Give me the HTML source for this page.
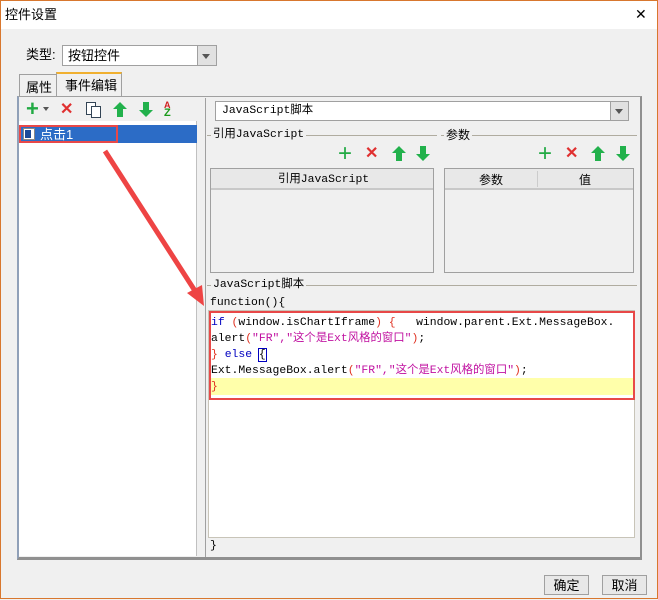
<!DOCTYPE html>
<html><head><meta charset="utf-8"><style>
*{box-sizing:border-box;margin:0;padding:0}
body{width:658px;height:599px;background:#f0f0f0;font-family:"Liberation Sans","Noto Sans CJK SC",sans-serif;font-size:12px;line-height:14px;color:#000;position:relative;overflow:hidden;border:1px solid #d8772e}
.a{position:absolute}
.mono{font-family:"Liberation Mono","Noto Sans CJK SC",monospace;font-size:11.4px;line-height:14px}
.gl{border-top:1px solid #b0aca0}
</style></head><body>
<div class="a" style="left:0;top:0;width:656px;height:28px;background:#fff"></div>
<div class="a" style="left:4px;top:6px;font-size:13px;line-height:16px">控件设置</div>
<div class="a" style="left:634px;top:5px;font-size:14px;line-height:16px">✕</div>
<div class="a" style="left:25px;top:46px;font-size:13px;line-height:16px">类型:</div>
<div class="a" style="left:61px;top:44px;width:155px;height:21px;border:1px solid #a0a0a0;background:#fff"></div>
<div class="a" style="left:67px;top:47px;font-size:13px;line-height:16px">按钮控件</div>
<div class="a" style="left:196px;top:45px;width:19px;height:19px;background:#e1e1e1;border-left:1px solid #a0a0a0"></div>
<div class="a" style="left:201px;top:53px;border:4px solid transparent;border-top:5px solid #555"></div>
<div class="a" style="left:18px;top:73px;width:38px;height:23px;border:1px solid #a0a0a0;border-bottom:none;background:#f0f0f0;padding:5px 0 0 6px;font-size:13px;line-height:16px">属性</div>
<div class="a" style="left:55px;top:71px;width:66px;height:25px;border:1px solid #a0a0a0;border-top:2px solid #f0b030;border-bottom:none;background:#f0f0f0;padding:4px 0 0 8px;font-size:13px;line-height:16px">事件编辑</div>
<div class="a" style="left:16px;top:95px;width:625px;height:464px;border:1px solid #a0a0a0;border-left:2px solid #90a0b8;border-right:2px solid #909090;border-bottom:3px solid #909090"></div>
<!-- left toolbar -->
<div class="a" style="left:25px;top:98px;color:#22aa44;font-size:22px;font-weight:bold;line-height:20px">+</div>
<div class="a" style="left:42px;top:106px;border:3px solid transparent;border-top:4px solid #555"></div>
<div class="a" style="left:59px;top:100px;color:#e03030;font-size:16px;font-weight:bold;line-height:18px">✕</div>
<div class="a" style="left:85px;top:101px;width:10px;height:13px;border:1px solid #345;background:#fff"></div>
<div class="a" style="left:90px;top:105px;width:10px;height:12px;border:1px solid #345;background:#fff"></div>
<svg class="a" style="left:111px;top:100px" width="16" height="17"><path d="M8 1L15 8H11V16H5V8H1Z" fill="#22b14c"/></svg>
<svg class="a" style="left:137px;top:100px" width="16" height="17"><path d="M8 16L15 9H11V1H5V9H1Z" fill="#22b14c"/></svg>
<div class="a" style="left:163px;top:100px;font-size:9px;color:#d02020;font-weight:bold;line-height:8px">A<br><span style="color:#1a9a1a;font-size:11px">Z</span></div>
<div class="a" style="left:18px;top:120px;width:178px;height:435px;background:#fff;border-right:1px solid #c0c0c0"></div>
<div class="a" style="left:198px;top:97px;width:7px;height:459px;background:#f0f0f0;border-right:1px solid #a0a0a0"></div>
<div class="a" style="left:18px;top:124px;width:178px;height:18px;background:#2c6cc6"></div>
<div class="a" style="left:18px;top:124px;width:99px;height:18px;border:2px solid #e84848"></div>
<div class="a" style="left:22px;top:127px;width:12px;height:12px;background:#fff;border:1px solid #888"></div>
<div class="a" style="left:24px;top:129px;width:6px;height:8px;background:#1a4a9a"></div>
<div class="a" style="left:39px;top:126px;color:#fff;font-size:13px;line-height:15px">点击1</div>
<!-- right -->
<div class="a" style="left:214px;top:100px;width:414px;height:20px;border:1px solid #a0a0a0;background:#fff"></div>
<div class="a mono" style="left:221px;top:103px">JavaScript脚本</div>
<div class="a" style="left:609px;top:101px;width:18px;height:18px;background:#e1e1e1;border-left:1px solid #a0a0a0"></div>
<div class="a" style="left:614px;top:108px;border:4px solid transparent;border-top:5px solid #555"></div>
<div class="a gl" style="left:206px;top:134px;width:230px"></div>
<div class="a mono" style="left:210px;top:127px;background:#f0f0f0;padding:0 2px">引用JavaScript</div>
<div class="a gl" style="left:440px;top:134px;width:196px"></div>
<div class="a" style="left:443px;top:127px;background:#f0f0f0;padding:0 2px">参数</div>
<div class="a" style="left:337px;top:143px;color:#22aa44;font-size:24px;line-height:20px">+</div>
<div class="a" style="left:364px;top:144px;color:#e03030;font-size:16px;font-weight:bold;line-height:18px">✕</div>
<svg class="a" style="left:390px;top:144px" width="16" height="17"><path d="M8 1L15 8H11V16H5V8H1Z" fill="#22b14c"/></svg>
<svg class="a" style="left:414px;top:144px" width="16" height="17"><path d="M8 16L15 9H11V1H5V9H1Z" fill="#22b14c"/></svg>
<div class="a" style="left:537px;top:143px;color:#22aa44;font-size:24px;line-height:20px">+</div>
<div class="a" style="left:564px;top:144px;color:#e03030;font-size:16px;font-weight:bold;line-height:18px">✕</div>
<svg class="a" style="left:589px;top:144px" width="16" height="17"><path d="M8 1L15 8H11V16H5V8H1Z" fill="#22b14c"/></svg>
<svg class="a" style="left:614px;top:144px" width="16" height="17"><path d="M8 16L15 9H11V1H5V9H1Z" fill="#22b14c"/></svg>
<div class="a" style="left:209px;top:167px;width:224px;height:105px;border:1px solid #a0a0a0"></div>
<div class="a" style="left:210px;top:168px;width:222px;height:21px;background:#e8e8e8;border-bottom:2px solid #c8c8c8"></div>
<div class="a mono" style="left:277px;top:172px">引用JavaScript</div>
<div class="a" style="left:443px;top:167px;width:190px;height:105px;border:1px solid #a0a0a0"></div>
<div class="a" style="left:444px;top:168px;width:188px;height:21px;background:#e8e8e8;border-bottom:2px solid #c8c8c8"></div>
<div class="a" style="left:536px;top:170px;width:1px;height:16px;background:#ccc"></div>
<div class="a" style="left:478px;top:172px">参数</div>
<div class="a" style="left:578px;top:172px">值</div>
<div class="a gl" style="left:206px;top:284px;width:430px"></div>
<div class="a mono" style="left:210px;top:277px;background:#f0f0f0;padding:0 2px">JavaScript脚本</div>
<div class="a mono" style="left:209px;top:295px">function(){</div>
<div class="a" style="left:207px;top:309px;width:427px;height:228px;background:#fff;border:1px solid #c8c4b8"></div>
<div class="a" style="left:209px;top:377px;width:423px;height:17px;background:#ffffaa"></div>
<div class="a" style="left:208px;top:310px;width:426px;height:89px;border:2px solid #e84848"></div>
<div class="a mono" style="left:210px;top:314px;line-height:16px;white-space:pre"><span style="color:#0000c0">if</span> <span style="color:#e03020">(</span>window.isChartIframe<span style="color:#e03020">) {</span>   window.parent.Ext.MessageBox.
alert<span style="color:#e03020">(</span><span style="color:#c010a0">"FR","这个是Ext风格的窗口"</span><span style="color:#e03020">)</span>;
<span style="color:#e03020">}</span> <span style="color:#0000c0">else</span> <span style="outline:1px solid #0000c0">{</span>
Ext.MessageBox.alert<span style="color:#e03020">(</span><span style="color:#c010a0">"FR","这个是Ext风格的窗口"</span><span style="color:#e03020">)</span>;
<span style="color:#e03020">}</span></div>
<div class="a mono" style="left:209px;top:538px">}</div>
<!-- arrow -->
<svg class="a" style="left:0;top:0" width="658" height="599"><line x1="104" y1="150" x2="196" y2="293" stroke="#ee4444" stroke-width="5"/><path d="M203 305L186 292L201 284Z" fill="#ee4444"/></svg>
<div class="a" style="left:543px;top:574px;width:45px;height:20px;border:1px solid #a0a0a0;background:#e8e8e8;text-align:center;padding-top:2px;font-size:13px;line-height:15px">确定</div>
<div class="a" style="left:601px;top:574px;width:45px;height:20px;border:1px solid #a0a0a0;background:#e8e8e8;text-align:center;padding-top:2px;font-size:13px;line-height:15px">取消</div>
</body></html>
